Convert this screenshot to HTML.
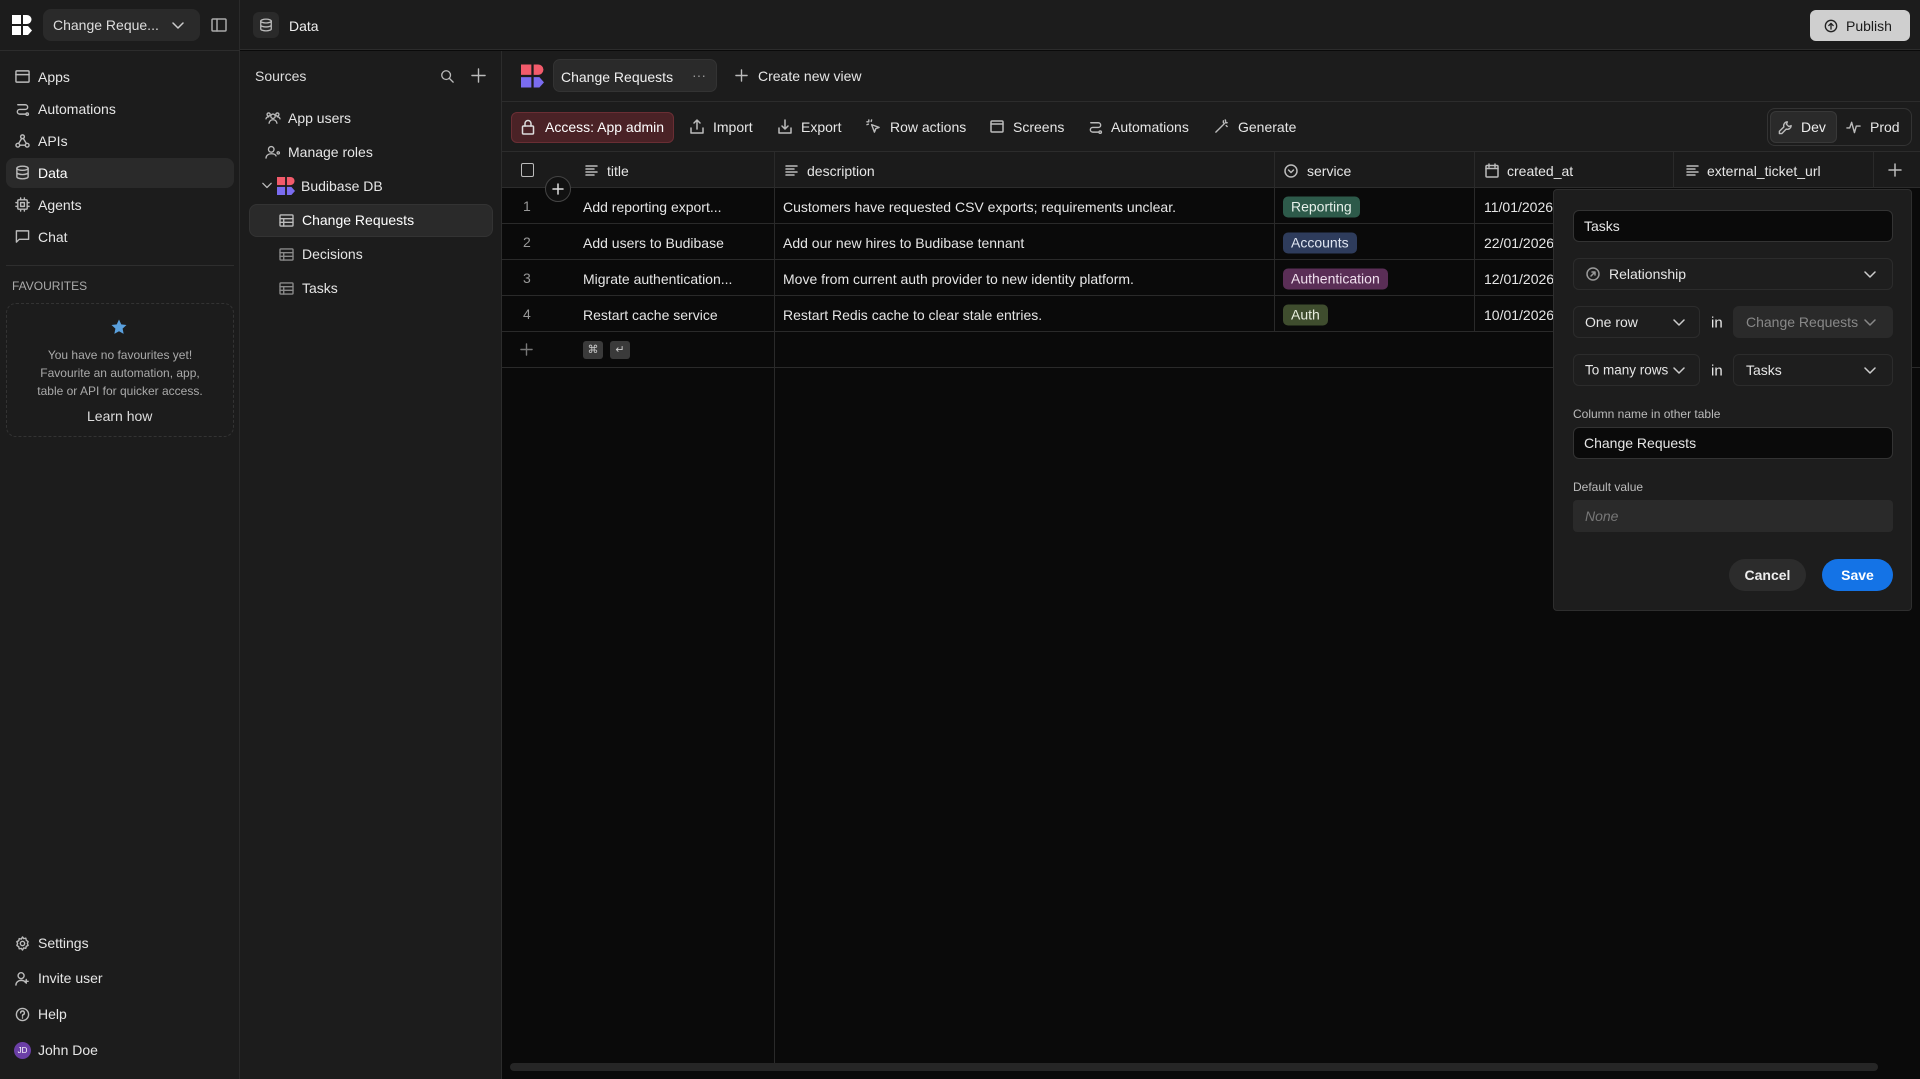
<!DOCTYPE html>
<html><head><meta charset="utf-8"><style>
*{box-sizing:border-box;margin:0;padding:0}
body{width:1920px;height:1079px;overflow:hidden;background:#0a0a0a;font-family:"Liberation Sans",sans-serif;font-size:14px;color:#e6e6e6;position:relative}
.a{position:absolute}
.t{position:absolute;white-space:nowrap;transform:translateY(-50%)}
svg{position:absolute;fill:none;stroke:currentColor;stroke-width:1.5;stroke-linecap:round;stroke-linejoin:round}
.ico{color:#bbb}
.hl{border-radius:8px;background:#2a2a2a}
.inp{position:absolute;border:1px solid #333;border-radius:6px;background:#0a0a0a}
.sel{position:absolute;border:1px solid #2c2c2c;border-radius:6px;background:#1e1e1e}
.row{position:absolute;left:502px;width:1051px;height:36px;border-bottom:1px solid #2a2a2a}
.tag{position:absolute;height:21px;line-height:21px;padding:0 8px;border-radius:5px;font-size:14px;transform:translateY(-50%)}
</style></head><body>
<div class="a" style="left:0;top:0;width:240px;height:1079px;background:#1c1c1c;border-right:1px solid #2a2a2a"></div>
<div class="a" style="left:240px;top:0;width:1680px;height:50px;background:#1c1c1c;border-bottom:1px solid #2c2c2c"></div>
<svg style="left:12px;top:15px;width:20px;height:20px;stroke:none;fill:#fff" viewBox="0 0 20 20"><rect x="0" y="0" width="9" height="9"/><path d="M11 0h4a4 4 0 0 1 0 9h-4z"/><rect x="0" y="11" width="9" height="9"/><path d="M11 11h5l4 4.5-4 4.5h-5z"/></svg>
<div class="a" style="left:43px;top:9px;width:157px;height:32px;background:#2a2a2a;border-radius:8px"></div>
<div class="t" style="left:53px;top:25px;font-size:14px;color:#ddd">Change Reque...</div>
<svg style="left:172px;top:19px;width:12px;height:12px;color:#ccc" viewBox="0 0 12 12"><path d="M1 4l5 5 5-5"/></svg>
<svg style="left:211px;top:17px;width:16px;height:16px;color:#aaa" viewBox="0 0 16 16"><rect x="1" y="2" width="14" height="12" rx="1"/><path d="M6 2v12"/></svg>
<div class="a" style="left:0;top:50px;width:240px;height:1px;background:#2c2c2c"></div>
<div class="a hl" style="left:6px;top:158px;width:228px;height:30px"></div>
<svg class="ico" style="left:15px;top:69px;width:15px;height:15px" viewBox="0 0 16 16"><rect x="1" y="2" width="14" height="12" rx="1"/><path d="M1 6h14"/></svg>
<div class="t" style="left:38px;top:77px">Apps</div>
<svg class="ico" style="left:15px;top:101px;width:15px;height:15px" viewBox="0 0 16 16"><path d="M3 4h8a2.5 2.5 0 0 1 0 5H5a2.5 2.5 0 0 0 0 5h6"/><circle cx="13" cy="14" r="1.3"/></svg>
<div class="t" style="left:38px;top:109px">Automations</div>
<svg class="ico" style="left:15px;top:133px;width:15px;height:15px" viewBox="0 0 16 16"><circle cx="8" cy="4" r="2"/><circle cx="3" cy="13" r="2"/><circle cx="13" cy="13" r="2"/><path d="M7 6l-3 5M5 13h6M9 6l3 5"/></svg>
<div class="t" style="left:38px;top:141px">APIs</div>
<svg class="ico" style="left:15px;top:165px;width:15px;height:15px" viewBox="0 0 16 16"><ellipse cx="8" cy="3.5" rx="6" ry="2.2"/><path d="M2 3.5v9c0 1.2 2.7 2.2 6 2.2s6-1 6-2.2v-9M2 8c0 1.2 2.7 2.2 6 2.2s6-1 6-2.2"/></svg>
<div class="t" style="left:38px;top:173px;color:#fff">Data</div>
<svg class="ico" style="left:15px;top:197px;width:15px;height:15px" viewBox="0 0 16 16"><rect x="3" y="3" width="10" height="10" rx="1"/><rect x="6" y="6" width="4" height="4"/><path d="M6 1v2M10 1v2M6 13v2M10 13v2M1 6h2M1 10h2M13 6h2M13 10h2"/></svg>
<div class="t" style="left:38px;top:205px">Agents</div>
<svg class="ico" style="left:15px;top:229px;width:15px;height:15px" viewBox="0 0 16 16"><path d="M1.5 2h13v9h-10l-3 3z"/></svg>
<div class="t" style="left:38px;top:237px">Chat</div>
<div class="a" style="left:6px;top:265px;width:228px;height:1px;background:#2e2e2e"></div>
<div class="t" style="left:12px;top:286px;font-size:12px;color:#aaa">FAVOURITES</div>
<div class="a" style="left:6px;top:303px;width:228px;height:134px;border:1px dashed #333;border-radius:10px"></div>
<svg style="left:110px;top:318px;width:18px;height:18px;stroke:none;fill:#5aa0dd" viewBox="0 0 24 24"><path d="M12 2l3 6.5 7 .8-5.2 4.8 1.4 7L12 17.6 5.8 21.1l1.4-7L2 9.3l7-.8z"/></svg>
<div class="a" style="left:6px;top:346px;width:228px;text-align:center;font-size:12px;line-height:18px;color:#aaa">You have no favourites yet!<br>Favourite an automation, app,<br>table or API for quicker access.</div>
<div class="t" style="left:87px;top:416px;font-size:14px;color:#ddd">Learn how</div>
<svg class="ico" style="left:15px;top:936px;width:15px;height:15px" viewBox="0 0 16 16"><circle cx="8" cy="8" r="2.3"/><path d="M8 1l1.3 1.8 2.2-.5.5 2.2L14 6l-.8 2 .8 2-2 1-.5 2.2-2.2-.5L8 15l-1.3-1.8-2.2.5-.5-2.2L2 10l.8-2L2 6l2-1 .5-2.2 2.2.5z"/></svg>
<div class="t" style="left:38px;top:943px">Settings</div>
<svg class="ico" style="left:15px;top:971px;width:15px;height:15px" viewBox="0 0 16 16"><circle cx="6.5" cy="5" r="3.2"/><path d="M1 15c0-3 2.5-5 5.5-5s4 1 4.5 2M12 9v4M10 11h4"/></svg>
<div class="t" style="left:38px;top:978px">Invite user</div>
<svg class="ico" style="left:15px;top:1007px;width:15px;height:15px" viewBox="0 0 16 16"><circle cx="8" cy="8" r="6.5"/><path d="M6 6.3a2 2 0 1 1 2.5 1.9c-.4.2-.5.5-.5 1v.6M8 11.5v.3"/></svg>
<div class="t" style="left:38px;top:1014px">Help</div>
<div class="a" style="left:14px;top:1042px;width:17px;height:17px;border-radius:50%;background:#6b3fa6;font-size:8px;line-height:17px;text-align:center;color:#fff">JD</div>
<div class="t" style="left:38px;top:1050px">John Doe</div>
<div class="a" style="left:253px;top:12px;width:26px;height:26px;border-radius:6px;background:#2a2a2a"></div>
<svg class="ico" style="left:259px;top:18px;width:14px;height:14px" viewBox="0 0 16 16"><ellipse cx="8" cy="3.5" rx="6" ry="2.2"/><path d="M2 3.5v9c0 1.2 2.7 2.2 6 2.2s6-1 6-2.2v-9M2 8c0 1.2 2.7 2.2 6 2.2s6-1 6-2.2"/></svg>
<div class="t" style="left:289px;top:26px;color:#eee">Data</div>
<div class="a" style="left:1810px;top:10px;width:100px;height:31px;border-radius:6px;background:#cfcfcf"></div>
<svg style="left:1824px;top:19px;width:14px;height:14px;color:#222" viewBox="0 0 16 16"><circle cx="8" cy="8" r="6.5"/><path d="M8 11.5V5M5.5 7.5L8 5l2.5 2.5"/></svg>
<div class="t" style="left:1846px;top:26px;color:#1b1b1b;font-size:14px">Publish</div>
<div class="a" style="left:240px;top:51px;width:262px;height:1028px;background:#1c1c1c;border-right:1px solid #2c2c2c"></div>
<div class="t" style="left:255px;top:76px;color:#ddd">Sources</div>
<svg class="ico" style="left:440px;top:69px;width:14px;height:14px" viewBox="0 0 16 16"><circle cx="7" cy="7" r="5"/><path d="M11 11l4 4"/></svg>
<svg class="ico" style="left:471px;top:68px;width:15px;height:15px" viewBox="0 0 16 16"><path d="M8 1v14M1 8h14"/></svg>
<svg class="ico" style="left:265px;top:111px;width:16px;height:14px" viewBox="0 0 18 16"><circle cx="9" cy="6" r="2.5"/><path d="M4.5 14c.5-2.5 2.3-4 4.5-4s4 1.5 4.5 4"/><circle cx="4" cy="4" r="1.8"/><circle cx="14" cy="4" r="1.8"/><path d="M1 9c.3-1.5 1.3-2.3 3-2.3M17 9c-.3-1.5-1.3-2.3-3-2.3"/></svg>
<div class="t" style="left:288px;top:118px">App users</div>
<svg class="ico" style="left:265px;top:145px;width:16px;height:14px" viewBox="0 0 18 16"><circle cx="7" cy="5" r="3.2"/><path d="M1 15c0-3 2.6-5 6-5s5 1 5.5 2.5"/><circle cx="15" cy="9" r="1.3"/></svg>
<div class="t" style="left:288px;top:152px">Manage roles</div>
<svg class="ico" style="left:262px;top:180px;width:10px;height:10px" viewBox="0 0 12 12"><path d="M1 4l5 5 5-5"/></svg>
<svg style="left:277px;top:177px;width:18px;height:18px;stroke:none" viewBox="0 0 20 20"><rect x="0" y="0" width="9" height="9" fill="#f25b6b"/><path d="M11 0h4a4 4 0 0 1 0 9h-4z" fill="#f25b6b"/><rect x="0" y="11" width="9" height="9" fill="#7a6cf0"/><path d="M11 11h5l4 4.5-4 4.5h-5z" fill="#7a6cf0"/></svg>
<div class="t" style="left:301px;top:186px">Budibase DB</div>
<div class="a hl" style="left:249px;top:204px;width:244px;height:33px;border:1px solid #333"></div>
<svg class="ico" style="left:279px;top:214px;width:15px;height:13px" viewBox="0 0 16 14"><rect x="1" y="1" width="14" height="12" rx="1"/><path d="M1 5h14M1 9h14M5 5v8"/></svg>
<div class="t" style="left:302px;top:220px;color:#fff">Change Requests</div>
<svg style="left:279px;top:248px;width:15px;height:13px;color:#888" viewBox="0 0 16 14"><rect x="1" y="1" width="14" height="12" rx="1"/><path d="M1 5h14M1 9h14M5 5v8"/></svg>
<div class="t" style="left:302px;top:254px">Decisions</div>
<svg style="left:279px;top:282px;width:15px;height:13px;color:#888" viewBox="0 0 16 14"><rect x="1" y="1" width="14" height="12" rx="1"/><path d="M1 5h14M1 9h14M5 5v8"/></svg>
<div class="t" style="left:302px;top:288px">Tasks</div>
<div class="a" style="left:502px;top:51px;width:1418px;height:101px;background:#1c1c1c"></div>
<div class="a" style="left:502px;top:101px;width:1418px;height:1px;background:#2c2c2c"></div>
<div class="a" style="left:502px;top:151px;width:1418px;height:1px;background:#2c2c2c"></div>
<svg style="left:521px;top:64px;width:23px;height:24px;stroke:none" viewBox="0 0 20 20"><rect x="0" y="0" width="9" height="9" fill="#f25b6b"/><path d="M11 0h4a4 4 0 0 1 0 9h-4z" fill="#f25b6b"/><rect x="0" y="11" width="9" height="9" fill="#7a6cf0"/><path d="M11 11h5l4 4.5-4 4.5h-5z" fill="#7a6cf0"/></svg>
<div class="a" style="left:553px;top:59px;width:164px;height:33px;background:#2a2a2a;border:1px solid #333;border-radius:7px"></div>
<div class="t" style="left:561px;top:77px;color:#f0f0f0">Change Requests</div>
<div class="t" style="left:692px;top:75px;color:#999">···</div>
<svg class="ico" style="left:735px;top:69px;width:13px;height:13px" viewBox="0 0 14 14"><path d="M7 1v12M1 7h12"/></svg>
<div class="t" style="left:758px;top:76px">Create new view</div>
<div class="a" style="left:511px;top:112px;width:163px;height:31px;border-radius:6px;background:#4a2226;border:1px solid #6a2e34"></div>
<svg style="left:521px;top:119px;width:14px;height:16px;color:#ddd" viewBox="0 0 14 16"><rect x="1.5" y="7" width="11" height="8" rx="1"/><path d="M4 7V4.5a3 3 0 0 1 6 0V7"/></svg>
<div class="t" style="left:545px;top:127px;color:#fff">Access: App admin</div>
<svg class="ico" style="left:690px;top:119px;width:14px;height:15px" viewBox="0 0 14 15"><path d="M7 10V1M4 4l3-3 3 3M1 9v5h12V9"/></svg>
<div class="t" style="left:713px;top:127px">Import</div>
<svg class="ico" style="left:778px;top:119px;width:14px;height:15px" viewBox="0 0 14 15"><path d="M7 1v9M4 7l3 3 3-3M1 9v5h12V9"/></svg>
<div class="t" style="left:801px;top:127px">Export</div>
<svg class="ico" style="left:866px;top:119px;width:15px;height:15px" viewBox="0 0 16 16"><path d="M6 6l8 3-3.5 1.2L9 14z"/><path d="M3 1v2M1 3h2M6 1l-.5 1.5M1 6l1.5-.5"/></svg>
<div class="t" style="left:890px;top:127px">Row actions</div>
<svg class="ico" style="left:990px;top:120px;width:14px;height:13px" viewBox="0 0 14 13"><rect x="1" y="1" width="12" height="11" rx="1"/><path d="M1 4h12"/></svg>
<div class="t" style="left:1013px;top:127px">Screens</div>
<svg class="ico" style="left:1088px;top:119px;width:15px;height:15px" viewBox="0 0 16 16"><path d="M3 4h8a2.5 2.5 0 0 1 0 5H5a2.5 2.5 0 0 0 0 5h6"/><circle cx="13" cy="14" r="1.3"/></svg>
<div class="t" style="left:1111px;top:127px">Automations</div>
<svg class="ico" style="left:1214px;top:119px;width:15px;height:15px" viewBox="0 0 16 16"><path d="M2 14l9-9M10 2v2M12 1l.5 1.5M14 4h-2M13 7l1 1"/></svg>
<div class="t" style="left:1238px;top:127px">Generate</div>
<div class="a" style="left:1767px;top:108px;width:145px;height:38px;border-radius:8px;border:1px solid #333;background:#1c1c1c"></div>
<div class="a" style="left:1770px;top:111px;width:67px;height:32px;border-radius:6px;background:#2a2a2a;border:1px solid #383838"></div>
<svg class="ico" style="left:1778px;top:120px;width:15px;height:15px" viewBox="0 0 16 16"><path d="M10 2a4 4 0 0 0-3.7 5.3L1.5 12v2.5H4L8.7 9.7A4 4 0 0 0 14 6l-2.5 1L9 4.5l1-2.5z"/></svg>
<div class="t" style="left:1801px;top:127px;color:#eee">Dev</div>
<svg class="ico" style="left:1846px;top:120px;width:15px;height:14px" viewBox="0 0 16 14"><path d="M1 8h3l2-6 3 11 2-7h4"/></svg>
<div class="t" style="left:1870px;top:127px">Prod</div>
<div class="a" style="left:502px;top:152px;width:1418px;height:36px;background:#1b1b1b;border-bottom:1px solid #2c2c2c"></div>
<div class="a" style="left:521px;top:163px;width:13px;height:14px;border:1.5px solid #bbb;border-radius:2px"></div>
<svg class="ico" style="left:585px;top:164px;width:13px;height:12px" viewBox="0 0 13 12"><path d="M1 2h11M1 5h8M1 8h11M1 11h8"/></svg>
<div class="t" style="left:607px;top:171px">title</div>
<svg class="ico" style="left:785px;top:164px;width:13px;height:12px" viewBox="0 0 13 12"><path d="M1 2h11M1 5h8M1 8h11M1 11h8"/></svg>
<div class="t" style="left:807px;top:171px">description</div>
<svg class="ico" style="left:1284px;top:164px;width:14px;height:14px" viewBox="0 0 14 14"><circle cx="7" cy="7" r="6"/><path d="M4.5 6l2.5 2.5L9.5 6"/></svg>
<div class="t" style="left:1307px;top:171px">service</div>
<svg class="ico" style="left:1485px;top:163px;width:14px;height:15px" viewBox="0 0 14 15"><rect x="1" y="2.5" width="12" height="11.5" rx="1"/><path d="M1 5.5h12M4 1v3M10 1v3"/></svg>
<div class="t" style="left:1507px;top:171px">created_at</div>
<svg class="ico" style="left:1686px;top:164px;width:13px;height:12px" viewBox="0 0 13 12"><path d="M1 2h11M1 5h8M1 8h11M1 11h8"/></svg>
<div class="t" style="left:1707px;top:171px">external_ticket_url</div>
<svg class="ico" style="left:1888px;top:163px;width:14px;height:14px" viewBox="0 0 14 14"><path d="M7 1v12M1 7h12"/></svg>
<div class="a" style="left:774px;top:152px;width:1px;height:915px;background:#2a2a2a"></div>
<div class="a" style="left:1274px;top:152px;width:1px;height:180px;background:#2a2a2a"></div>
<div class="a" style="left:1474px;top:152px;width:1px;height:180px;background:#2a2a2a"></div>
<div class="a" style="left:1673px;top:152px;width:1px;height:36px;background:#2a2a2a"></div>
<div class="a" style="left:1873px;top:152px;width:1px;height:36px;background:#2a2a2a"></div>
<div class="row" style="top:188px"></div><div class="row" style="top:224px"></div><div class="row" style="top:260px"></div><div class="row" style="top:296px"></div><div class="row" style="top:332px;width:1418px"></div>
<div class="t" style="left:523px;top:206px;color:#999">1</div>
<div class="t" style="left:523px;top:242px;color:#999">2</div>
<div class="t" style="left:523px;top:278px;color:#999">3</div>
<div class="t" style="left:523px;top:314px;color:#999">4</div>
<div class="a" style="left:545px;top:176px;width:26px;height:26px;border-radius:50%;background:#111;border:1px solid #444"></div>
<svg style="left:552px;top:183px;width:12px;height:12px;color:#ddd" viewBox="0 0 12 12"><path d="M6 1v10M1 6h10"/></svg>
<div class="t" style="left:583px;top:207px">Add reporting export...</div>
<div class="t" style="left:583px;top:243px">Add users to Budibase</div>
<div class="t" style="left:583px;top:279px">Migrate authentication...</div>
<div class="t" style="left:583px;top:315px">Restart cache service</div>
<div class="t" style="left:783px;top:207px">Customers have requested CSV exports; requirements unclear.</div>
<div class="t" style="left:783px;top:243px">Add our new hires to Budibase tennant</div>
<div class="t" style="left:783px;top:279px">Move from current auth provider to new identity platform.</div>
<div class="t" style="left:783px;top:315px">Restart Redis cache to clear stale entries.</div>
<div class="tag" style="left:1283px;top:207px;background:#2d5a4a;color:#e6f0ea">Reporting</div>
<div class="tag" style="left:1283px;top:243px;background:#2e3c5c;color:#e0e6f2">Accounts</div>
<div class="tag" style="left:1283px;top:279px;background:#5a2e56;color:#f0e0ee">Authentication</div>
<div class="tag" style="left:1283px;top:315px;background:#3f4d2e;color:#e8eedf">Auth</div>
<div class="t" style="left:1484px;top:207px">11/01/2026</div>
<div class="t" style="left:1484px;top:243px">22/01/2026</div>
<div class="t" style="left:1484px;top:279px">12/01/2026</div>
<div class="t" style="left:1484px;top:315px">10/01/2026</div>
<svg style="left:520px;top:343px;width:13px;height:13px;color:#777" viewBox="0 0 14 14"><path d="M7 1v12M1 7h12"/></svg>
<div class="a" style="left:583px;top:341px;width:20px;height:18px;border-radius:3px;background:#3a3a3a;font-size:11px;color:#ccc;text-align:center;line-height:18px">⌘</div>
<div class="a" style="left:610px;top:341px;width:20px;height:18px;border-radius:3px;background:#3a3a3a;font-size:11px;color:#ccc;text-align:center;line-height:18px">↵</div>
<div class="a" style="left:510px;top:1063px;width:1368px;height:8px;border-radius:4px;background:#262626"></div>
<div class="a" style="left:1553px;top:189px;width:359px;height:422px;background:#1d1d1d;border:1px solid #2e2e2e;border-radius:4px"></div>
<div class="inp" style="left:1573px;top:210px;width:320px;height:32px"></div>
<div class="t" style="left:1584px;top:226px">Tasks</div>
<div class="sel" style="left:1573px;top:258px;width:320px;height:32px"></div>
<svg style="left:1586px;top:267px;width:14px;height:14px;color:#999" viewBox="0 0 14 14"><circle cx="7" cy="7" r="6"/><path d="M5 9l4-4M6 5h3v3"/></svg>
<div class="t" style="left:1609px;top:274px">Relationship</div>
<svg style="left:1864px;top:269px;width:12px;height:10px;color:#ccc" viewBox="0 0 12 10"><path d="M1 3l5 5 5-5"/></svg>
<div class="sel" style="left:1573px;top:306px;width:127px;height:32px"></div>
<div class="t" style="left:1585px;top:322px">One row</div>
<svg style="left:1673px;top:317px;width:12px;height:10px;color:#ccc" viewBox="0 0 12 10"><path d="M1 3l5 5 5-5"/></svg>
<div class="t" style="left:1711px;top:323px;font-size:15px">in</div>
<div class="a" style="left:1733px;top:306px;width:160px;height:32px;border-radius:6px;background:#2a2a2a"></div>
<div class="t" style="left:1746px;top:322px;color:#888">Change Requests</div>
<svg style="left:1864px;top:317px;width:12px;height:10px;color:#888" viewBox="0 0 12 10"><path d="M1 3l5 5 5-5"/></svg>
<div class="sel" style="left:1573px;top:354px;width:127px;height:32px"></div>
<div class="t" style="left:1585px;top:370px;font-size:13.5px">To many rows</div>
<svg style="left:1673px;top:365px;width:12px;height:10px;color:#ccc" viewBox="0 0 12 10"><path d="M1 3l5 5 5-5"/></svg>
<div class="t" style="left:1711px;top:371px;font-size:15px">in</div>
<div class="sel" style="left:1733px;top:354px;width:160px;height:32px"></div>
<div class="t" style="left:1746px;top:370px">Tasks</div>
<svg style="left:1864px;top:365px;width:12px;height:10px;color:#ccc" viewBox="0 0 12 10"><path d="M1 3l5 5 5-5"/></svg>
<div class="t" style="left:1573px;top:414px;font-size:12px;color:#bbb">Column name in other table</div>
<div class="inp" style="left:1573px;top:427px;width:320px;height:32px"></div>
<div class="t" style="left:1584px;top:443px">Change Requests</div>
<div class="t" style="left:1573px;top:487px;font-size:12px;color:#bbb">Default value</div>
<div class="a" style="left:1573px;top:500px;width:320px;height:32px;border-radius:4px;background:#2a2a2a"></div>
<div class="t" style="left:1585px;top:516px;font-style:italic;color:#777">None</div>
<div class="a" style="left:1729px;top:559px;width:77px;height:32px;border-radius:16px;background:#2c2c2c;text-align:center;line-height:32px;font-weight:bold;color:#eee">Cancel</div>
<div class="a" style="left:1822px;top:559px;width:71px;height:32px;border-radius:16px;background:#1473e6;text-align:center;line-height:32px;font-weight:bold;color:#fff">Save</div>
</body></html>
